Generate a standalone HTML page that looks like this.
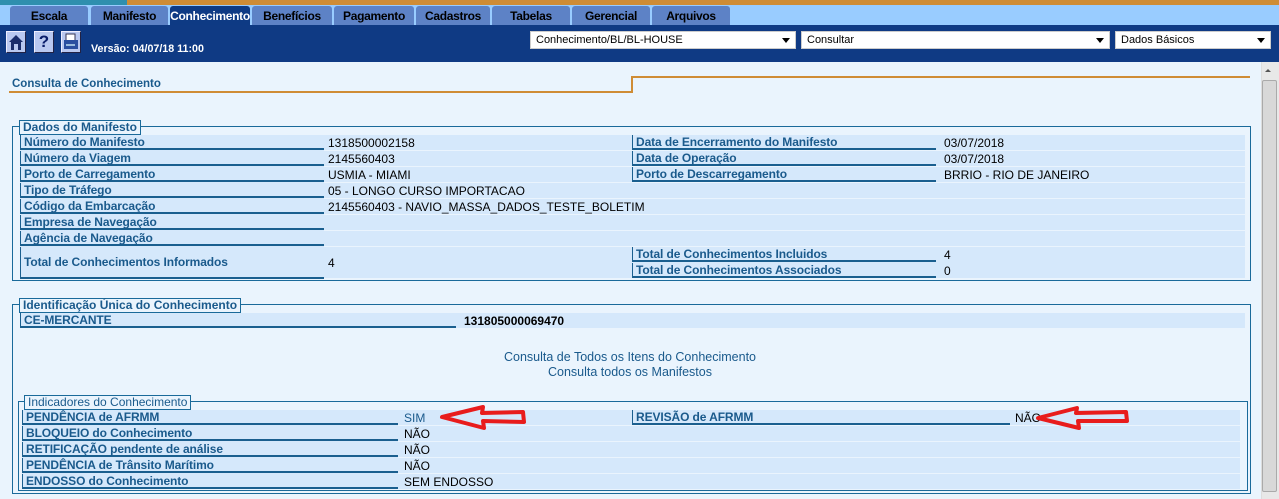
<!DOCTYPE html>
<html><head><meta charset="utf-8"><style>
*{margin:0;padding:0;box-sizing:border-box}
body{width:1279px;height:499px;overflow:hidden;background:#eaf4fd;font-family:"Liberation Sans",sans-serif;position:relative}
.a{position:absolute}
.tab{position:absolute;top:6px;height:19px;background:#5d82c6;border-radius:3px 3px 0 0;font:bold 12px "Liberation Sans",sans-serif;color:#000;text-align:center;line-height:20px;letter-spacing:-0.3px}
.tab.on{background:#0e3a84;color:#fff}
.row{position:absolute;height:15px;background:#d5e8fb}
.lab{position:absolute;height:15px;border-left:1px solid #1a5f8f;border-bottom:2px solid #1a5f8f;background:#d5e8fb;font:bold 12px "Liberation Sans",sans-serif;color:#1a5a8c;padding-left:3px;line-height:15px;white-space:nowrap;letter-spacing:-0.1px}
.val{position:absolute;font:12px "Liberation Sans",sans-serif;color:#000;line-height:17px;white-space:nowrap}
.fs{position:absolute;border:1px solid #1a6a9a}
.leg{position:absolute;background:#eaf4fd;border:1px solid #1a6a9a;font:bold 12px "Liberation Sans",sans-serif;color:#1a5a8c;padding:0 3px;line-height:13px}
.sel{position:absolute;top:31px;height:18px;background:#fff;border:1px solid #ccc;font:11px "Liberation Sans",sans-serif;line-height:16px;padding-left:5px}
.sel:after{content:"";position:absolute;right:5px;top:6px;border:4px solid transparent;border-top:5px solid #000}
.btn{position:absolute;top:31px;width:20px;height:22px;background:#b9c8f0;border:1px solid #eef;border-right-color:#224;border-bottom-color:#224}
.lk{position:absolute;width:1260px;left:0;text-align:center;font:12.5px "Liberation Sans",sans-serif;color:#1a5a8c}
.sep{position:absolute;height:1px;background:#eaf4fd}
</style></head><body>
<div class="a" style="left:0;top:0;width:1279px;height:5px;background:#cf8c35"></div>
<div class="a" style="left:0;top:0;width:127px;height:5px;background:#2f8fae"></div>
<div class="a" style="left:0;top:5px;width:1279px;height:20px;background:#99ccff"></div>
<div class="tab" style="left:10px;width:78px">Escala</div>
<div class="tab" style="left:91px;width:77px">Manifesto</div>
<div class="tab on" style="left:170px;width:80px">Conhecimento</div>
<div class="tab" style="left:252px;width:80px">Benefícios</div>
<div class="tab" style="left:334px;width:80px">Pagamento</div>
<div class="tab" style="left:416px;width:74px">Cadastros</div>
<div class="tab" style="left:492px;width:78px">Tabelas</div>
<div class="tab" style="left:572px;width:78px">Gerencial</div>
<div class="tab" style="left:652px;width:78px">Arquivos</div>
<div class="a" style="left:0;top:25px;width:1279px;height:37px;background:#0f3a84"></div>
<div class="btn" style="left:6px"><svg width="18" height="20"><path d="M2 10 L9 3 L16 10 L14 10 L14 18 L4 18 L4 10Z" fill="#1b2d6b"/><rect x="7" y="12" width="4" height="6" fill="#b9c8f0"/></svg></div>
<div class="btn" style="left:34px;font:bold 17px 'Liberation Sans';color:#0a1d6b;text-align:center;line-height:20px">?</div>
<div class="btn" style="left:61px"><svg width="18" height="20"><rect x="4" y="2" width="9" height="7" fill="#fff" stroke="#335"/><rect x="2" y="8" width="14" height="9" fill="#2a4fa0"/><rect x="4" y="12" width="9" height="2" fill="#9bd"/></svg></div>
<div class="a" style="left:91px;top:43px;font:bold 10.7px 'Liberation Sans';color:#fff">Versão: 04/07/18 11:00</div>
<div class="sel" style="left:530px;width:266px">Conhecimento/BL/BL-HOUSE</div>
<div class="sel" style="left:801px;width:309px">Consultar</div>
<div class="sel" style="left:1115px;width:156px">Dados Básicos</div>
<div class="a" style="left:1261px;top:62px;width:18px;height:437px;background:#e8e8e8;border-left:1px solid #ddd"></div>
<div class="a" style="left:1262px;top:80px;width:15px;height:412px;background:#d8d8d8;border:1px solid #aaa;border-radius:2px"></div>
<div class="a" style="left:1265px;top:66px;border:3px solid transparent;border-bottom:3px solid #555"></div>
<div class="a" style="left:12px;top:78px;font:bold 11.5px 'Liberation Sans';color:#1a5a8c">Consulta de Conhecimento</div>
<div class="a" style="left:9px;top:91px;width:624px;height:2px;background:#cf8c35"></div>
<div class="a" style="left:631px;top:76px;width:2px;height:17px;background:#cf8c35"></div>
<div class="a" style="left:631px;top:76px;width:619px;height:2px;background:#cf8c35"></div>
<div class="fs" style="left:12px;top:126px;width:1239px;height:155px"></div>
<div class="leg" style="left:19px;top:120px">Dados do Manifesto</div>
<div class="row" style="left:20px;top:135px;width:1225px;height:143px"></div>
<div class="sep" style="left:324px;top:150px;width:921px"></div>
<div class="sep" style="left:324px;top:166px;width:921px"></div>
<div class="sep" style="left:324px;top:182px;width:921px"></div>
<div class="sep" style="left:324px;top:198px;width:921px"></div>
<div class="sep" style="left:324px;top:214px;width:921px"></div>
<div class="sep" style="left:324px;top:230px;width:921px"></div>
<div class="sep" style="left:324px;top:246px;width:921px"></div>
<div class="lab" style="left:20px;top:135px;width:304px">Número do Manifesto</div><div class="val" style="left:328px;top:135px">1318500002158</div>
<div class="lab" style="left:20px;top:151px;width:304px">Número da Viagem</div><div class="val" style="left:328px;top:151px">2145560403</div>
<div class="lab" style="left:20px;top:167px;width:304px">Porto de Carregamento</div><div class="val" style="left:328px;top:167px">USMIA - MIAMI</div>
<div class="lab" style="left:20px;top:183px;width:304px">Tipo de Tráfego</div><div class="val" style="left:328px;top:183px">05 - LONGO CURSO IMPORTACAO</div>
<div class="lab" style="left:20px;top:199px;width:304px">Código da Embarcação</div><div class="val" style="left:328px;top:199px">2145560403 - NAVIO_MASSA_DADOS_TESTE_BOLETIM</div>
<div class="lab" style="left:20px;top:215px;width:304px">Empresa de Navegação</div>
<div class="lab" style="left:20px;top:231px;width:304px">Agência de Navegação</div>
<div class="lab" style="left:20px;top:247px;width:304px;height:32px;line-height:31px">Total de Conhecimentos Informados</div><div class="val" style="left:328px;top:255px">4</div>
<div class="lab" style="left:632px;top:135px;width:304px">Data de Encerramento do Manifesto</div><div class="val" style="left:944px;top:135px">03/07/2018</div>
<div class="lab" style="left:632px;top:151px;width:304px">Data de Operação</div><div class="val" style="left:944px;top:151px">03/07/2018</div>
<div class="lab" style="left:632px;top:167px;width:304px">Porto de Descarregamento</div><div class="val" style="left:944px;top:167px">BRRIO - RIO DE JANEIRO</div>
<div class="lab" style="left:632px;top:247px;width:304px">Total de Conhecimentos Incluidos</div><div class="val" style="left:944px;top:247px">4</div>
<div class="lab" style="left:632px;top:263px;width:304px">Total de Conhecimentos Associados</div><div class="val" style="left:944px;top:263px">0</div>
<div class="fs" style="left:12px;top:304px;width:1239px;height:190px"></div>
<div class="leg" style="left:19px;top:298px">Identificação Única do Conhecimento</div>
<div class="row" style="left:20px;top:313px;width:1225px"></div>
<div class="lab" style="left:20px;top:313px;width:436px">CE-MERCANTE</div><div class="val" style="left:464px;top:313px;font-weight:bold">131805000069470</div>
<div class="lk" style="top:350px">Consulta de Todos os Itens do Conhecimento</div>
<div class="lk" style="top:365px">Consulta todos os Manifestos</div>
<div class="fs" style="left:18px;top:401px;width:1230px;height:90px"></div>
<div class="leg" style="left:24px;top:395px;font-weight:normal">Indicadores do Conhecimento</div>
<div class="row" style="left:22px;top:410px;width:1218px;height:79px"></div>
<div class="sep" style="left:398px;top:425px;width:842px"></div>
<div class="sep" style="left:398px;top:441px;width:842px"></div>
<div class="sep" style="left:398px;top:457px;width:842px"></div>
<div class="sep" style="left:398px;top:473px;width:842px"></div>
<div class="lab" style="left:22px;top:410px;width:376px">PENDÊNCIA de AFRMM</div><div class="val" style="left:404px;top:410px;color:#1a5a8c">SIM</div>
<div class="lab" style="left:22px;top:426px;width:376px">BLOQUEIO do Conhecimento</div><div class="val" style="left:404px;top:426px">NÃO</div>
<div class="lab" style="left:22px;top:442px;width:376px">RETIFICAÇÃO pendente de análise</div><div class="val" style="left:404px;top:442px">NÃO</div>
<div class="lab" style="left:22px;top:458px;width:376px">PENDÊNCIA de Trânsito Marítimo</div><div class="val" style="left:404px;top:458px">NÃO</div>
<div class="lab" style="left:22px;top:474px;width:376px">ENDOSSO do Conhecimento</div><div class="val" style="left:404px;top:474px">SEM ENDOSSO</div>
<div class="lab" style="left:632px;top:410px;width:378px">REVISÃO de AFRMM</div><div class="val" style="left:1015px;top:410px">NÃO</div>
<svg class="a" style="left:0;top:0" width="1279" height="499"><g fill="none" stroke="#e81c1c" stroke-width="4" stroke-linejoin="round">
<path d="M442 417 L483 407 L482 413 L523 412 L524 422 L483 421 L484 428 Z"/>
<path d="M1038 418 L1077 408 L1076 413 L1126 412 L1127 421 L1078 421 L1079 428 Z"/></g></svg>
</body></html>
